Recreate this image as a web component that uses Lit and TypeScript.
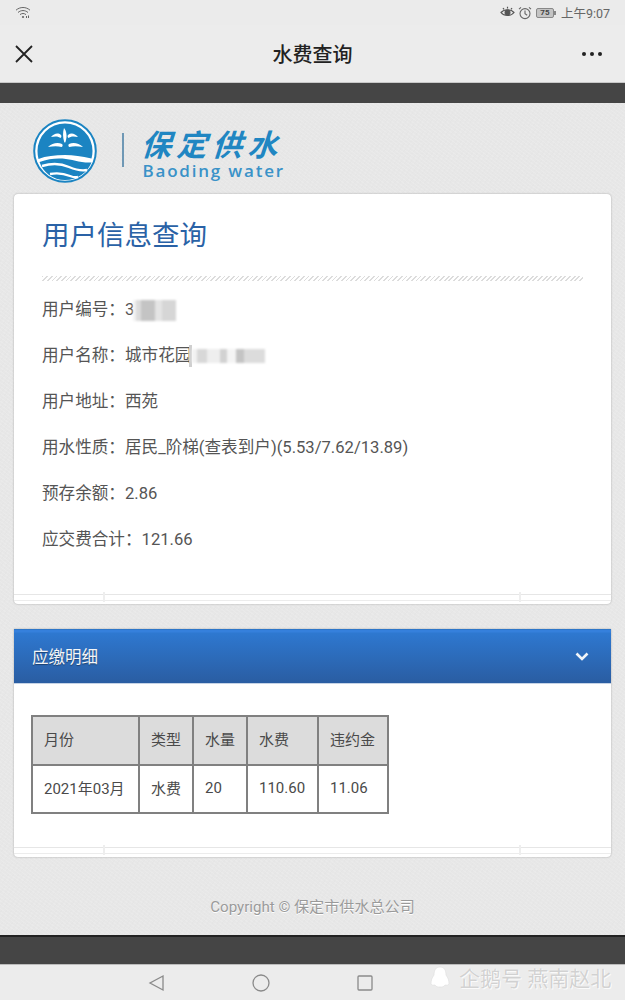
import { LitElement, html, css } from "lit";
import { customElement } from "lit/decorators.js";

const ornament = html`<div class="orn"><i class="a"></i><s></s><i class="b"></i><s></s><i class="c"></i></div>`;

@customElement("app-root")
export class AppRoot extends LitElement {
  static styles = css`
    :host { display: block; width: 625px; height: 1000px; overflow: hidden; position: relative;
      font-family: Roboto, "Noto Sans CJK SC", sans-serif; color: #484848; }
    .page { height: 1000px; display: flex; flex-direction: column; background: #e8e8e8; }
    .status { height: 25px; flex: none; background: #ebebeb; display: flex; align-items: center; padding: 0 15px; justify-content: space-between; }
    .status-r { display: flex; align-items: center; gap: 3px; font-size: 12.5px; color: #666; }
    .status-r svg { display: block; }
    .batt { width: 18px; height: 10px; border: 1px solid #888; border-radius: 2px; font-size: 8px; line-height: 8px; text-align: center; background: #c4c4c4; color: #444; font-weight: 700; box-sizing: border-box; margin-left: 1px; }
    .nub { width: 2px; height: 4px; background: #888; margin: 0 2px 0 -3px; }
    .nav { height: 57px; flex: none; background: #ececec; display: flex; align-items: center; justify-content: space-between; padding: 0 14px; border-bottom: 1px solid #c8c8c8; position: relative; }
    .nav svg { display: block; }
    .nav .more { margin-right: 8px; }
    .title { font-size: 20px; font-weight: 500; color: #222; position: absolute; left: 0; right: 0; text-align: center; top: 16px; line-height: 28px; }
    .dark { height: 20px; flex: none; background: #454545; }
    .main { flex: 1; min-height: 0; display: flex; flex-direction: column;
      background-color: #e7e7e7;
      background-image:
        repeating-linear-gradient(37deg, rgba(255,255,255,.12) 0 1px, transparent 1px 3px),
        repeating-linear-gradient(-53deg, rgba(0,0,0,.008) 0 1px, transparent 1px 4px); }
    .logo { height: 90px; flex: none; display: flex; align-items: flex-start; padding: 16px 0 0 33px; box-sizing: border-box; }
    .logo svg { display: block; flex: none; }
    .sep { width: 1.5px; height: 34px; background: #6f98b5; margin: 14px 19px 0 25px; flex: none; }
    .brand { display: flex; flex-direction: column; color: #2086c2; width: 145px; }
    .cn { font-size: 30px; line-height: 36px; height: 36px; font-weight: 700; letter-spacing: 5.5px; transform: skewX(-18deg); transform-origin: left bottom; margin-top: 6px; margin-left: -4px; white-space: nowrap; font-family: "Noto Sans CJK SC", sans-serif; }
    .en { font-family: "Open Sans", sans-serif; font-size: 17px; line-height: 20px; margin-top: 0; font-weight: 600; letter-spacing: 1.8px; white-space: nowrap; color: #3a92c8; }
    .card { margin: 1px 14px 0; background: #fff; border-radius: 4px; box-shadow: 0 0 2px rgba(0,0,0,.3); flex: none; display: flex; flex-direction: column; }
    .info { height: 410px; }
    h1 { margin: 0; height: 82px; box-sizing: border-box; padding: 24px 28px 0; font-size: 27.5px; line-height: 36px; font-weight: 400; color: #2a62a6; }
    .stripe { height: 5px; margin: 0 28px 6px; flex: none; background: repeating-linear-gradient(135deg, #dcdcdc 0 1.4px, #fff 1.4px 3.3px); }
    .row { height: 46px; padding: 0 28px; font-size: 16.6px; line-height: 46px; display: flex; align-items: center; white-space: nowrap; color: #555; }
    .blur1 { width: 43px; height: 21px; margin-left: -1px; filter: blur(1.2px);
      background: linear-gradient(90deg, #f2f2f2 0 3px, #dcdcdc 3px 8px, #c4c4c4 8px 22px, #e4e4e4 22px 29px, #d6d6d6 29px 43px); }
    .blur2 { width: 76px; height: 22px; margin-left: -2px; display: flex; align-items: center; }
    .blur2 i { display: block; width: 3px; height: 22px; background: #cfcfcf; flex: none; }
    .blur2 b { display: block; width: 73px; height: 14px; filter: blur(1.2px);
      background: linear-gradient(90deg, #f2f2f2 0 5px, #d8d8d8 5px 15px, #eee 15px 28px, #d2d2d2 28px 35px, #f4f4f4 35px 44px, #c4c4c4 44px 52px, #dcdcdc 52px 73px); }
    .orn { margin-top: auto; height: 10px; display: flex; flex: none; margin-bottom: 2px; }
    .orn i { display: block; height: 5px; margin-top: 2px; border-top: 1px solid #e6e6e6; border-bottom: 1px solid #ececec; }
    .orn s { display: block; width: 2px; height: 10px; background: #eee; }
    .orn .a { width: 89px; } .orn .b { flex: 1; } .orn .c { width: 90px; }
    .detail { height: 228px; margin-top: 25px; border-radius: 0 0 4px 4px; }
    .head { height: 55px; flex: none; box-sizing: border-box; padding: 0 22px 0 18px; display: flex; align-items: center; justify-content: space-between;
      background: linear-gradient(180deg, #2d76c8 0 1px, #3580dc 1px 3px, #2e78d0 4px, #2a5da2 100%);
      border-bottom: 1px solid #c5d3e6; color: #f4f6f8; font-size: 16.5px; text-shadow: 0 1px 1px rgba(0,0,0,.4); }
    .head svg { display: block; }
    .tb-wrap { padding: 31px 0 0 17px; }
    table { border-collapse: collapse; font-size: 15px; color: #4a4a4a; table-layout: fixed; width: 356px; }
    th, td { border: 2px solid #808080; padding: 0 0 3px 11px; text-align: left; font-weight: 400; white-space: nowrap; box-sizing: border-box; }
    th { background: #dcdcdc; height: 49px; padding-bottom: 5px; }
    td { height: 48px; }
    .foot { margin-top: 40px; height: 20px; text-align: center; font-size: 15.1px; line-height: 20px; color: #9a9a9a; text-shadow: 0 1px 0 #fff; flex: none; }
    .spacer { flex: 1; }
    .bar { height: 29px; flex: none; background: #454545; border-top: 2px solid #222; box-sizing: border-box; }
    .sysnav { height: 36px; flex: none; background: #ececec; border-top: 1px solid #bbb; box-sizing: border-box; display: flex; align-items: center; justify-content: center; gap: 84px; padding-right: 104px; }
    .sysnav svg { display: block; }
    .mark { position: absolute; left: 430px; top: 963px; display: flex; align-items: flex-start; gap: 9px; font-size: 21px; line-height: 30px; color: rgba(190,190,190,.7); text-shadow: 0 0 1px #fff, 1px 1px 0 rgba(255,255,255,.8); white-space: nowrap; }
    .mark svg { display: block; margin-top: 3px; }
    .mark span { margin-top: 1px; }
  `;

  render() {
    return html`<div class="page">
      <div class="status">
        <svg width="16" height="13" viewBox="0 0 16 13" fill="none" stroke="#666" stroke-width="1">
          <path d="M1 4.2C5 .6 11 .6 15 4.2"/><path d="M3 6.5c3-2.6 7-2.6 10 0"/><path d="M5 8.6c2-1.5 4-1.5 6 0"/>
          <circle cx="8" cy="11" r="1.1" fill="#666" stroke="none"/><path d="M11.5 12V10M13.5 12V9.5" />
        </svg>
        <div class="status-r">
          <svg width="15" height="13" viewBox="0 0 15 13" fill="none" stroke="#555" stroke-width="1.2">
            <path d="M1 6.5C4 2.8 11 2.8 14 6.5 11 10.500 4 10.500 1 6.500Z"/><circle cx="7.500" cy="6.500" r="2.400" fill="#555"/>
            <path d="M3 2 4 3.400M12 2 11 3.400M7.500 .8V2.400"/>
          </svg>
          <svg width="14" height="14" viewBox="0 0 14 14" fill="none" stroke="#666" stroke-width="1.100">
            <circle cx="7" cy="7.600" r="5"/><path d="M7 4.600v3.200l2.200 1.400M1 3.200 3 1.300M13 3.200 11 1.300"/>
          </svg>
          <div class="batt">75</div><div class="nub"></div>
          <span>上午9:07</span>
        </div>
      </div>
      <div class="nav">
        <svg width="20" height="20" viewBox="0 0 20 20" fill="none" stroke="#222" stroke-width="1.800"><path d="M2 2 18 18M18 2 2 18"/></svg>
        <div class="title">水费查询</div>
        <svg class="more" width="22" height="6" viewBox="0 0 22 6" fill="#222"><circle cx="3" cy="3" r="2"/><circle cx="11" cy="3" r="2"/><circle cx="19" cy="3" r="2"/></svg>
      </div>
      <div class="dark"></div>
      <div class="main">
        <div class="logo">
          <svg width="64" height="64" viewBox="0 0 64 64">
            <circle cx="32" cy="32" r="30.800" fill="#fff" stroke="#1b84c2" stroke-width="2"/>
            <path d="M32 4.500A27.500 27.500 0 0 1 59.500 32c0 2.500-.3 5-1 7.500-10-2-18-3.500-26.500-3.500-10 0-19 1-26.500 4-.7-2.700-1-5.300-1-8A27.500 27.500 0 0 1 32 4.500Z" fill="#1b84c2"/>
            <path d="M6.500 43c8-3 16-4 23-3.500 10 .8 17 4.500 29 4-4 10-14 17.500-26.500 17.500C20 61 10 53.500 6.500 43Z" fill="#1b84c2"/>
            <path d="M9 47c10-3 19-2.500 27 1 7 3 13 4 18 3M17 55c8-1.500 14-.5 20 2 3 1.200 6 1.500 8 1" fill="none" stroke="#fff" stroke-width="2.400"/>
            <path d="M31 9c2.500 3 3.500 8 1.500 14-.4.8-1 .8-1.300 0-1.500-5-1.500-10-.2-14ZM18 18c3-3.500 7-4.500 10-2 .6.800.6 2-.5 3-1.500-1.500-5-2-9.500-1ZM45 18c-3-3.500-7-4.500-10-2-.6.800-.6 2 .5 3 1.500-1.500 5-2 9.500-1ZM15 28c4-4 10-5 14-3 1 1 .8 2.300-.4 3-3.600-1-8-1-13.600 0ZM50 28c-4-4-10-5-14-3-1 1-.8 2.300.4 3 3.600-1 8-1 13.600 0Z" fill="#fff"/>
          </svg>
          <div class="sep"></div>
          <div class="brand"><div class="cn">保定供水</div><div class="en">Baoding water</div></div>
        </div>
        <div class="card info">
          <h1>用户信息查询</h1>
          <div class="stripe"></div>
          <div class="row"><span>用户编号：3</span><div class="blur1"></div></div>
          <div class="row"><span>用户名称：城市花园</span><div class="blur2"><i></i><b></b></div></div>
          <div class="row">用户地址：西苑</div>
          <div class="row">用水性质：居民_阶梯(查表到户)(5.53/7.62/13.89)</div>
          <div class="row">预存余额：2.86</div>
          <div class="row">应交费合计：121.66</div>
          ${ornament}
        </div>
        <div class="card detail">
          <div class="head"><span>应缴明细</span>
            <svg width="14" height="9" viewBox="0 0 14 9" fill="none" stroke="#f0f4f8" stroke-width="2.600"><path d="M1.500 1.500 7 7l5.500-5.500"/></svg>
          </div>
          <div class="tb-wrap">
            <table>
              <colgroup><col style="width:107px"/><col style="width:54px"/><col style="width:54px"/><col style="width:71px"/><col style="width:70px"/></colgroup>
              <tr><th>月份</th><th>类型</th><th>水量</th><th>水费</th><th>违约金</th></tr>
              <tr><td>2021年03月</td><td>水费</td><td>20</td><td>110.60</td><td>11.06</td></tr>
            </table>
          </div>
          ${ornament}
        </div>
        <div class="foot">Copyright © 保定市供水总公司</div>
        <div class="spacer"></div>
      </div>
      <div class="bar"></div>
      <div class="sysnav">
        <svg width="20" height="20" viewBox="0 0 20 20" fill="none" stroke="#8a8a8a" stroke-width="1.300"><path d="M16 3V17L3 10Z"/></svg>
        <svg width="20" height="20" viewBox="0 0 20 20" fill="none" stroke="#8a8a8a" stroke-width="1.300"><circle cx="10" cy="10" r="8"/></svg>
        <svg width="20" height="20" viewBox="0 0 20 20" fill="none" stroke="#8a8a8a" stroke-width="1.300"><rect x="3" y="3" width="14" height="14" rx="1"/></svg>
      </div>
      <div class="mark">
        <svg width="20" height="24" viewBox="0 0 20 24"><path d="M10 1c4 0 6 3 6 8 2 3 3 5 3 9-1 2-3 1-4 1-1 2-3 2-5 2s-4 0-5-2c-1 0-3 1-4-1 0-4 1-6 3-9 0-5 2-8 6-8Z" fill="#fff" stroke="#ddd" stroke-width=".6"/></svg>
        <span>企鹅号 燕南赵北</span>
      </div>
    </div>`;
  }
}
